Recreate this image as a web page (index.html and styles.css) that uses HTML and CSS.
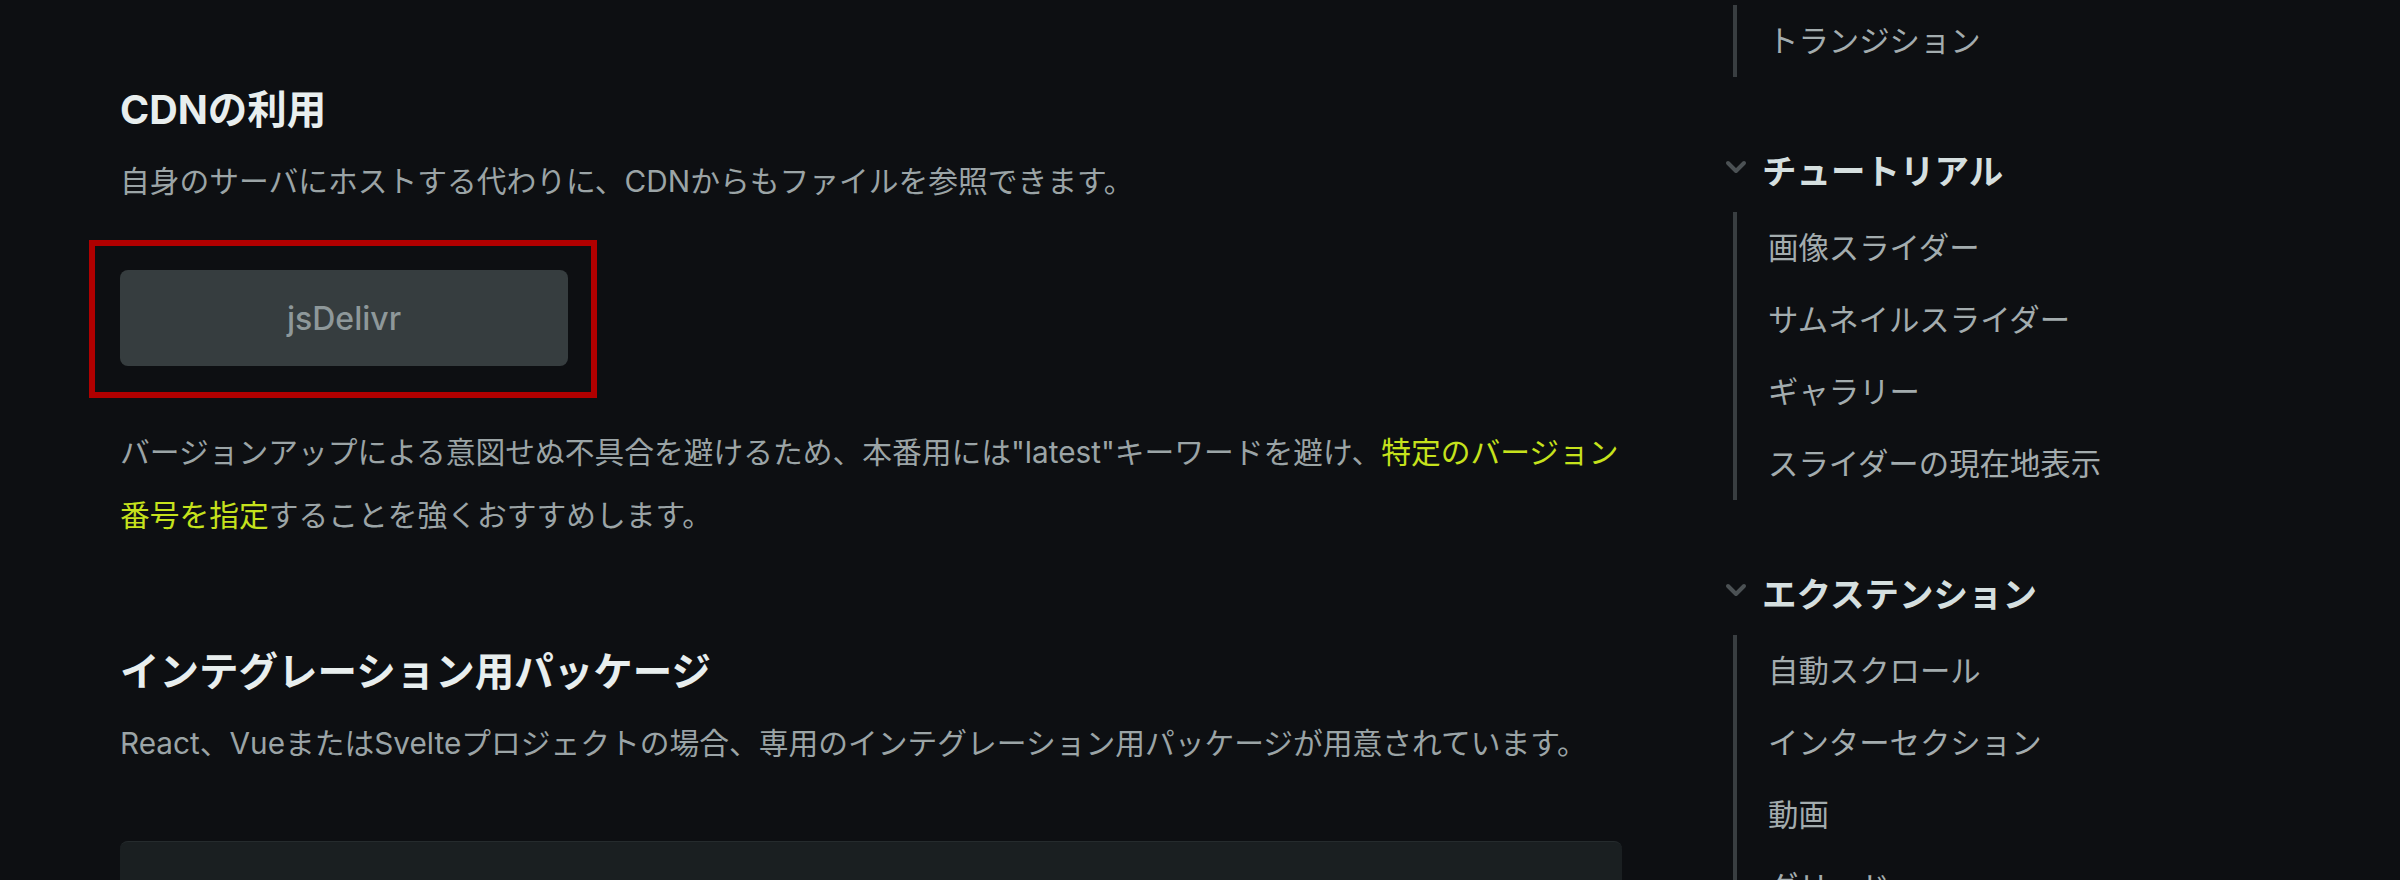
FILE: index.html
```html
<!DOCTYPE html>
<html lang="ja">
<head>
<meta charset="utf-8">
<title>CDNの利用</title>
<link rel="stylesheet" href="styles.css">
</head>
<body>
<div class="page">
  <main class="main">
    <h2 class="heading">CDNの利用</h2>
    <p class="text">自身のサーバにホストする代わりに、CDNからもファイルを参照できます。</p>
    <div class="tabs">
      <button class="tab">jsDelivr</button>
    </div>
    <p class="text">バージョンアップによる意図せぬ不具合を避けるため、本番用には"latest"キーワードを避け、<a class="link" href="#">特定のバージョン番号を指定</a>することを強くおすすめします。</p>
    <h2 class="heading heading-2">インテグレーション用パッケージ</h2>
    <p class="text">React、VueまたはSvelteプロジェクトの場合、専用のインテグレーション用パッケージが用意されています。</p>
    <div class="code"></div>
  </main>
  <nav class="sidebar">
    <ul class="list">
      <li class="item">トランジション</li>
    </ul>
    <div class="group">
      <div class="group-title">
        <svg class="chev" width="22" height="14" viewBox="0 0 22 14"><polyline points="3,3 11,11 19,3" fill="none" stroke="#4b5154" stroke-width="4" stroke-linecap="round" stroke-linejoin="round"/></svg>
        <span>チュートリアル</span>
      </div>
      <ul class="list">
        <li class="item">画像スライダー</li>
        <li class="item">サムネイルスライダー</li>
        <li class="item">ギャラリー</li>
        <li class="item">スライダーの現在地表示</li>
      </ul>
    </div>
    <div class="group">
      <div class="group-title">
        <svg class="chev" width="22" height="14" viewBox="0 0 22 14"><polyline points="3,3 11,11 19,3" fill="none" stroke="#4b5154" stroke-width="4" stroke-linecap="round" stroke-linejoin="round"/></svg>
        <span>エクステンション</span>
      </div>
      <ul class="list">
        <li class="item">自動スクロール</li>
        <li class="item">インターセクション</li>
        <li class="item">動画</li>
        <li class="item">グリッド</li>
      </ul>
    </div>
  </nav>
</div>
</body>
</html>
```

FILE: styles.css
```css
html, body {
  margin: 0;
  padding: 0;
  background: #0d0f12;
  height: 880px;
  overflow: hidden;
}
body {
  font-family: Inter, "Noto Sans CJK JP", sans-serif;
  color: #9ba4a6;
}
.page {
  display: flex;
  align-items: flex-start;
}
.main {
  width: 1502px;
  padding-left: 120px;
  padding-top: 81px;
  flex: none;
}
.heading {
  margin: 0 0 11px;
  font-size: 39.5px;
  line-height: 58px;
  font-weight: 700;
  color: #e8eeee;
}
.heading-2 {
  margin-top: 96px;
}
.text {
  margin: 0;
  font-size: 29.75px;
  line-height: 63px;
  color: #9ba4a6;
}
.link {
  color: #c6e21c;
  text-decoration: none;
}
.tabs {
  position: relative;
  display: flex;
  width: 448px;
  margin: 57px 0 55px;
}
.tabs::after {
  content: "";
  position: absolute;
  left: -31px;
  top: -30px;
  right: -29px;
  bottom: -32px;
  border: 6px solid #b00000;
  pointer-events: none;
}
.tab {
  width: 448px;
  height: 96px;
  border: none;
  border-radius: 8px;
  background: #363d3f;
  color: #8e989a;
  font-family: Inter, "Noto Sans CJK JP", sans-serif;
  font-size: 32px;
  font-weight: 500;
}
.code {
  margin-top: 66px;
  height: 200px;
  background: #1a1f21;
  border-top: 1px solid #252b2d;
  border-radius: 8px;
}
.sidebar {
  margin-left: 104px;
  padding-top: 5px;
  flex: none;
  width: 560px;
}
.list {
  list-style: none;
  margin: 0 0 0 7px;
  padding: 0;
  border-left: 4px solid #393e41;
}
.item {
  height: 72px;
  line-height: 72px;
  padding-left: 31px;
  font-size: 30.4px;
  color: #a3acae;
  white-space: nowrap;
}
.group {
  margin-top: 56px;
}
.group-title {
  display: flex;
  align-items: center;
  height: 72px;
  margin-bottom: 7px;
  font-size: 34.5px;
  font-weight: 700;
  color: #d5dfdf;
}
.chev {
  margin-left: -1px;
  margin-right: 15px;
  margin-top: -4px;
}
```
